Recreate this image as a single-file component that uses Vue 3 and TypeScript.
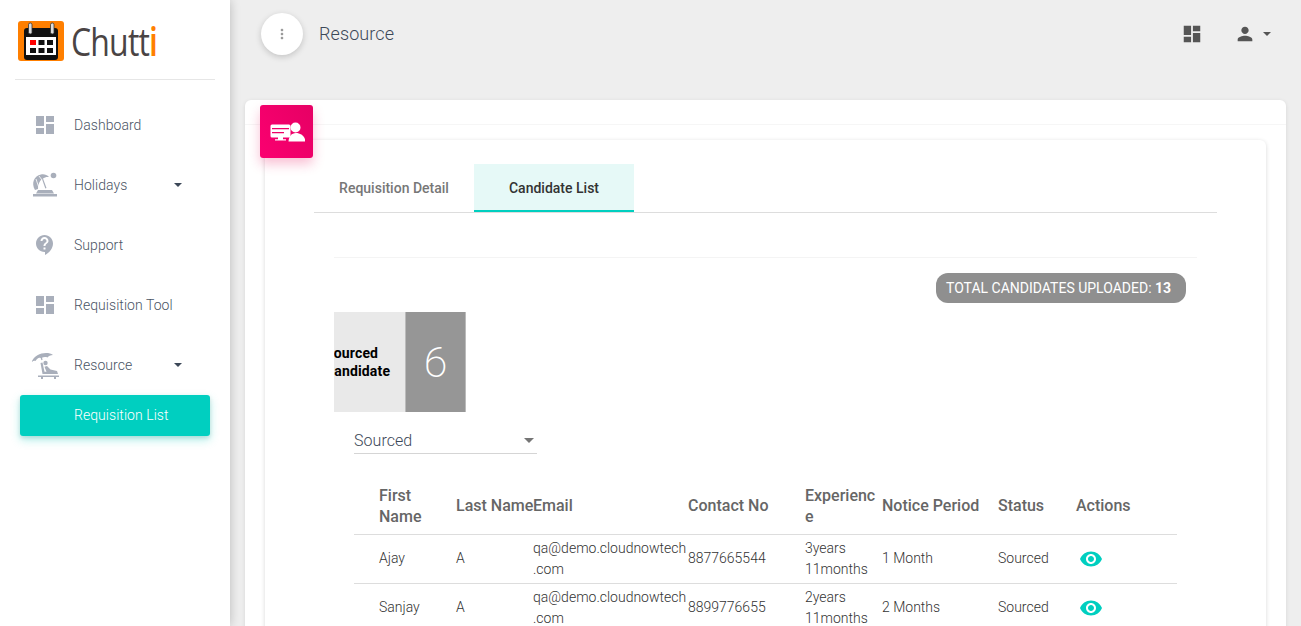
<template>
  <div class="layout">
    <aside class="sidebar">
      <div class="logo">
        <svg class="logo-mark" viewBox="0 0 46 40">
          <rect width="46" height="40" rx="3" fill="#ff7f00" />
          <rect x="6" y="7" width="34" height="32" rx="3" fill="#111" />
          <rect x="8" y="16" width="30" height="18" fill="#fff" />
          <rect x="12" y="19" width="6" height="5" fill="#f00" />
          <rect x="20.5" y="19" width="6" height="5" fill="#111" />
          <rect x="29" y="19" width="6" height="5" fill="#111" />
          <rect x="12" y="27" width="6" height="5" fill="#111" />
          <rect x="20.5" y="27" width="6" height="5" fill="#111" />
          <rect x="29" y="27" width="6" height="5" fill="#111" />
          <rect x="10.5" y="2" width="3.5" height="11" rx="1.7" fill="#ddd" stroke="#333" stroke-width="0.8" />
          <rect x="32.5" y="2" width="3.5" height="11" rx="1.7" fill="#ddd" stroke="#333" stroke-width="0.8" />
        </svg>
        <span class="logo-text">Chutt<b>i</b></span>
      </div>

      <nav class="nav">
        <a v-for="item in navItems" :key="item.label" class="nav-item">
          <span class="nav-icon">
            <svg v-if="item.icon === 'dashboard'" class="icon-24" viewBox="0 0 24 24"><path :d="dashboardPath" /></svg>
            <svg v-else-if="item.icon === 'support'" class="icon-24" viewBox="0 0 24 24"><path :d="supportPath" /></svg>
            <svg v-else-if="item.icon === 'beach'" class="icon-28" viewBox="0 0 28 28">
              <path d="M4 19C0 12 3 5 10 3.500c3-.6 6 .2 8 2.500-2.500-.3-4.500.2-6 1.500l3.500 9.500-1.200.5L11 8c-2.500 2-4 5.500-4 10z" />
              <path d="M5 8l3 9M8 5l3 4" stroke="#fff" stroke-width="0.8" fill="none" />
              <circle cx="22.500" cy="4.500" r="2.800" />
              <path d="M7 19h14l2 3.500H5zM2 23h24v2.500H2z" />
            </svg>
            <svg v-else class="icon-28" viewBox="0 0 28 28">
              <path d="M.5 11C3 5 9 2 15 2c3 0 5 .5 7 2-2.500.3-4.500 1-5.500 2.500-2-.6-4-.5-5.500.3l.6 2-1.200.4-.6-2C8 6 6 7.500 4.500 10 3.500 9.500 2 10 .5 11z" />
              <circle cx="14.500" cy="12" r="2.200" />
              <path d="M9.500 12l2 11H27l-1-3-6.500-1.500L16 15l-2.500.8 2 5h-2L11.500 11.500z" />
              <path d="M7 24.500h21V26h-3v2h-2v-2H12v2h-2v-2H7z" />
            </svg>
          </span>
          <span class="nav-label">{{ item.label }}</span>
          <span v-if="item.caret" class="caret nav-caret"></span>
        </a>
        <a class="nav-active">Requisition List</a>
      </nav>
    </aside>

    <main class="main">
      <header class="topbar">
        <button class="menu-btn">
          <svg viewBox="0 0 24 24" width="16" height="16"><path :d="dotsPath" /></svg>
        </button>
        <span class="page-title">Resource</span>
        <div class="top-actions">
          <svg class="top-icon" viewBox="0 0 24 24"><path :d="dashboardPath" /></svg>
          <svg class="top-icon person" viewBox="0 0 24 24"><path :d="personPath" /></svg>
          <span class="caret top-caret"></span>
        </div>
      </header>

      <section class="card">
        <div class="card-rule"></div>
        <div class="card-badge">
          <svg viewBox="0 0 36 24" width="36" height="24">
            <path d="M3 4.500h17a1.500 1.500 0 0 1 1.500 1.500v10a1.500 1.500 0 0 1-1.500 1.500h-6v1.800h3v1.200H6v-1.200h3v-1.800H3A1.500 1.500 0 0 1 1.500 16V6A1.500 1.500 0 0 1 3 4.500z" fill="#fff" />
            <path d="M3 8h17v1.200H3zM3 12h12v1.200H3z" fill="#ee0066" />
            <circle cx="26.500" cy="7.500" r="5" fill="#fff" />
            <path d="M19.500 21.500c.3-5 3-8.500 7.500-8.500s9 3 9.500 8.500z" fill="#fff" />
          </svg>
        </div>
        <div class="inner">
          <div class="tabs">
            <div class="tab">Requisition Detail</div>
            <div class="tab active">Candidate List</div>
          </div>

          <div class="content">
            <div class="total-row">
              <span class="total-pill">TOTAL CANDIDATES UPLOADED: <b>13</b></span>
            </div>

            <div class="stat">
              <div class="stat-label"><div class="stat-text">Sourced<br />Candidate</div></div>
              <div class="stat-count">6</div>
            </div>

            <div class="select">
              <span>Sourced</span>
              <span class="caret select-caret"></span>
            </div>

            <div class="table">
              <div class="row head">
                <div v-for="h in headers" :key="h" class="cell">{{ h }}</div>
              </div>
              <div v-for="c in candidates" :key="c.first" class="row">
                <div class="cell">{{ c.first }}</div>
                <div class="cell">{{ c.last }}</div>
                <div class="cell">{{ c.email }}</div>
                <div class="cell">{{ c.phone }}</div>
                <div class="cell">{{ c.exp }}</div>
                <div class="cell">{{ c.notice }}</div>
                <div class="cell">{{ c.status }}</div>
                <div class="cell">
                  <svg class="eye" viewBox="0 0 24 24"><path :d="eyePath" /></svg>
                </div>
              </div>
            </div>
          </div>
        </div>
      </section>
    </main>
  </div>
</template>

<script setup lang="ts">
const dashboardPath = "M3 13h8V3H3v10zm0 8h8v-6H3v6zm10 0h8V11h-8v10zm0-18v6h8V3h-8z";
const supportPath =
  "M11.5 2C6.81 2 3 5.81 3 10.5S6.81 19 11.5 19h.5v3c4.86-2.34 8-7 8-11.5C20 5.81 16.19 2 11.5 2zm1 14.5h-2v-2h2v2zm0-3.5h-2c0-3.25 3-3 3-5 0-1.1-.9-2-2-2s-2 .9-2 2h-2c0-2.21 1.79-4 4-4s4 1.79 4 4c0 2.5-3 2.75-3 5z";
const personPath =
  "M12 12c2.21 0 4-1.79 4-4s-1.79-4-4-4-4 1.79-4 4 1.790 4 4 4zm0 2c-2.670 0-8 1.340-8 4v2h16v-2c0-2.660-5.330-4-8-4z";
const dotsPath =
  "M12 8c1.100 0 2-.9 2-2s-.9-2-2-2-2 .9-2 2 .9 2 2 2zm0 2c-1.100 0-2 .9-2 2s.9 2 2 2 2-.9 2-2-.9-2-2-2zm0 6c-1.100 0-2 .9-2 2s.9 2 2 2 2-.9 2-2-.9-2-2-2z";
const eyePath =
  "M12 4.500C7 4.500 2.730 7.610 1 12c1.730 4.390 6 7.500 11 7.500s9.270-3.110 11-7.500c-1.730-4.390-6-7.500-11-7.500zM12 17c-2.760 0-5-2.240-5-5s2.240-5 5-5 5 2.240 5 5-2.240 5-5 5zm0-8c-1.660 0-3 1.340-3 3s1.340 3 3 3 3-1.340 3-3-1.340-3-3-3z";

const navItems = [
  { label: "Dashboard", icon: "dashboard", caret: false },
  { label: "Holidays", icon: "beach", caret: true },
  { label: "Support", icon: "support", caret: false },
  { label: "Requisition Tool", icon: "dashboard", caret: false },
  { label: "Resource", icon: "lounge", caret: true },
];

const headers = ["First Name", "Last Name", "Email", "Contact No", "Experience", "Notice Period", "Status", "Actions"];

const candidates = [
  { first: "Ajay", last: "A", email: "qa@demo.cloudnowtech.com", phone: "8877665544", exp: "3years 11months", notice: "1 Month", status: "Sourced" },
  { first: "Sanjay", last: "A", email: "qa@demo.cloudnowtech.com", phone: "8899776655", exp: "2years 11months", notice: "2 Months", status: "Sourced" },
];
</script>

<style>
html,
body {
  margin: 0;
  height: 100%;
  overflow: hidden;
  background: #eee;
}
</style>

<style scoped>
.layout {
  display: flex;
  height: 626px;
  overflow: hidden;
  font-family: Roboto, "Liberation Sans", sans-serif;
  color: #3c4858;
  background: #eee;
}

/* sidebar */
.sidebar {
  flex: 0 0 230px;
  background: #fff;
  box-shadow: 0 0 10px rgba(0, 0, 0, 0.22);
  z-index: 2;
}
.logo {
  display: flex;
  align-items: center;
  gap: 7px;
  height: 80px;
  margin: 0 15px;
  padding: 0 3px;
  box-sizing: border-box;
  border-bottom: 1px solid #e6e6e6;
}
.logo-mark {
  width: 46px;
  height: 40px;
  flex: none;
  margin-top: 2px;
}
.logo-text {
  font-family: "Open Sans", sans-serif;
  font-size: 39px;
  font-weight: 400;
  color: #4a4444;
  letter-spacing: -1px;
  transform: scaleX(0.82);
  transform-origin: left center;
  margin-top: 2px;
}
.logo-text b {
  font-weight: 600;
  color: #ff7f00;
}
.nav {
  display: flex;
  flex-direction: column;
  padding-top: 15px;
}
.nav-item {
  display: flex;
  align-items: center;
  height: 60px;
  font-size: 14px;
  font-weight: 300;
  letter-spacing: 0.05px;
  color: #4a5464;
}
.nav-icon {
  flex: 0 0 74px;
  display: flex;
  justify-content: center;
  padding-left: 15px;
  box-sizing: border-box;
  fill: #a9afbb;
}
.icon-24 {
  width: 24px;
  height: 24px;
}
.icon-28 {
  width: 28px;
  height: 28px;
}
.nav-label {
  flex: 1;
}
.caret {
  display: block;
  width: 0;
  height: 0;
  border-left: 4px solid transparent;
  border-right: 4px solid transparent;
  border-top: 4px solid #3c4858;
}
.nav-caret {
  margin-right: 48px;
}
.nav-active {
  display: block;
  height: 41px;
  line-height: 41px;
  margin: 0 20px;
  padding-left: 54px;
  border-radius: 3px;
  background: #00cfc0;
  color: #fff;
  font-size: 14px;
  font-weight: 300;
  letter-spacing: 0.05px;
  box-shadow: 0 4px 10px rgba(0, 207, 192, 0.3), 0 2px 4px rgba(0, 0, 0, 0.12);
}

/* header */
.main {
  flex: 1;
  min-width: 0;
  padding: 0 15px;
}
.topbar {
  display: flex;
  align-items: center;
  height: 68px;
  padding-left: 16px;
}
.menu-btn {
  width: 42px;
  height: 42px;
  border: 0;
  border-radius: 50%;
  background: #fff;
  fill: #999;
  padding: 0;
  display: flex;
  align-items: center;
  justify-content: center;
  box-shadow: 0 2px 6px rgba(0, 0, 0, 0.18);
}
.page-title {
  margin: 0 0 2px 16px;
  font-size: 18px;
  font-weight: 300;
  letter-spacing: 0.1px;
  color: #3c4858;
}
.top-actions {
  margin-left: auto;
  display: flex;
  align-items: center;
  fill: #555;
  padding-right: 15px;
}
.top-icon {
  width: 22px;
  height: 22px;
}
.person {
  margin-left: 31px;
}
.top-caret {
  margin-left: 7px;
  border-top-color: #555;
}

/* card */
.card {
  position: relative;
  margin-top: 32px;
  height: 560px;
  background: #fff;
  border-radius: 6px;
  padding: 40px 20px 0;
  box-shadow: 0 1px 4px rgba(0, 0, 0, 0.1);
}
.card-badge {
  position: absolute;
  left: 15px;
  top: 5px;
  width: 53px;
  height: 53px;
  border-radius: 3px;
  background: linear-gradient(60deg, #fb0070, #e60064);
  display: flex;
  align-items: center;
  justify-content: center;
  box-shadow: 0 6px 12px rgba(233, 30, 99, 0.28);
}
.card-rule {
  position: absolute;
  left: 0;
  right: 0;
  top: 24px;
  border-top: 1px solid #f6f6f6;
}
.inner {
  height: 100%;
  padding: 24px 49px 0;
  box-shadow: 0 1px 4px rgba(0, 0, 0, 0.16);
  border-radius: 6px 6px 0 0;
}
.tabs {
  display: flex;
  border-bottom: 1px solid #ddd;
  height: 48px;
}
.tab {
  width: 160px;
  height: 48px;
  box-sizing: border-box;
  line-height: 48px;
  text-align: center;
  font-size: 14px;
  font-weight: 500;
  color: #777;
}
.tab.active {
  background: #e6f9f7;
  color: #333;
  border-bottom: 2px solid #00cfc0;
}
.content {
  margin: 44px 20px 0;
  border-top: 1px solid #f4f4f4;
  padding-top: 15px;
}
.total-row {
  display: flex;
  justify-content: flex-end;
  padding-right: 11px;
}
.total-pill {
  display: block;
  width: 250px;
  height: 30px;
  line-height: 30px;
  box-sizing: border-box;
  padding-left: 10px;
  border-radius: 12px;
  background: #8f8f8f;
  color: #fff;
  font-size: 14px;
  white-space: nowrap;
}
.stat {
  display: flex;
  width: 132px;
  height: 100px;
  margin-top: 9px;
}
.stat-label {
  width: 71px;
  overflow: hidden;
  box-sizing: border-box;
  background: #e9e9e9;
  color: #000;
  font-size: 14px;
  font-weight: 700;
  line-height: 18px;
  padding-top: 32px;
  white-space: nowrap;
}
.stat-text {
  margin-left: -9px;
  letter-spacing: 0.15px;
}
.stat-count {
  flex: 1;
  background: #969696;
  border-left: 1px solid #bbb;
  border-right: 1px solid #bbb;
  color: #fff;
  font-size: 43px;
  font-weight: 200;
  line-height: 100px;
  text-align: center;
}
.select {
  display: flex;
  align-items: center;
  justify-content: space-between;
  width: 183px;
  height: 25px;
  margin: 17px 0 0 20px;
  padding: 0 3px 1px 0;
  box-sizing: border-box;
  border-bottom: 1px solid #d5d5d5;
  font-size: 16px;
  font-weight: 300;
  letter-spacing: 0.05px;
}
.select-caret {
  border-left-width: 5px;
  border-right-width: 5px;
  border-top: 5px solid #757575;
}
.table {
  margin: 31px 0 0 20px;
  width: 823px;
}
.row {
  display: grid;
  grid-template-columns: 102px 77px 155px 117px 77px 116px 78px 101px;
  min-height: 49px;
  align-items: center;
  box-sizing: border-box;
  border-bottom: 1px solid #ddd;
  font-size: 14px;
  font-weight: 300;
  line-height: 21px;
  color: #333;
}
.row.head {
  padding-bottom: 7px;
  font-size: 16px;
  font-weight: 500;
  color: #666;
}
.row.head .cell:nth-child(2) {
  white-space: nowrap;
}
.cell {
  overflow-wrap: anywhere;
}
.row .cell:first-child {
  padding-left: 25px;
}
/* one-line cells sit a pixel higher than the wrapped ones */
.row.head .cell:not(:nth-child(1)):not(:nth-child(5)),
.row:not(.head) .cell:not(:nth-child(3)):not(:nth-child(5)):not(:nth-child(8)) {
  margin-top: -2px;
}
.eye {
  display: block;
  width: 24px;
  height: 24px;
  margin-left: 3px;
  fill: #00cfc0;
}
</style>
